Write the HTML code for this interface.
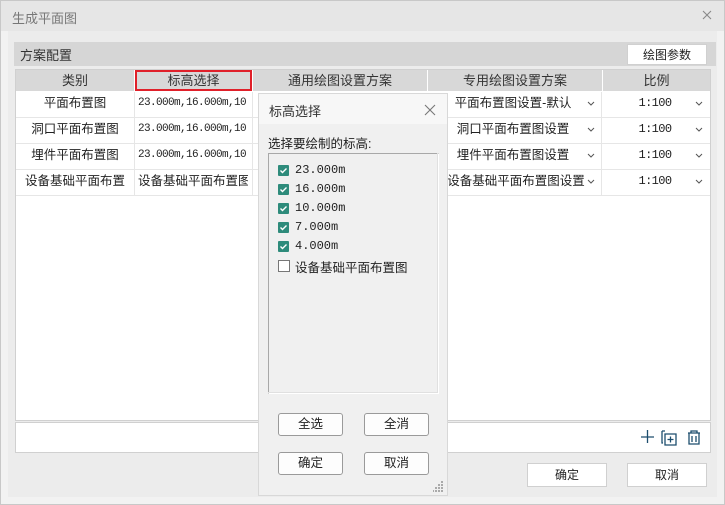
<!DOCTYPE html>
<html><head><meta charset="utf-8"><style>
*{box-sizing:border-box;margin:0;padding:0}
body{width:725px;height:505px;overflow:hidden;background:#f2f2f2;font-family:"Liberation Sans","Noto Sans CJK SC",sans-serif;font-size:12px;color:#222;position:relative}
.a{position:absolute}
.win{left:0;top:0;width:725px;height:505px;border:1px solid #c8c8c8}
.title{left:1px;top:1px;width:723px;height:30px;background:#e6e6e6}
.panel{left:8px;top:31px;width:709px;height:466px;background:#ececec}
.hdrbar{left:14px;top:42px;width:702px;height:24px;background:#d6d6d6}
.btn{background:#fff;border:1px solid #d0d0d0;text-align:center;font-size:12px}
.tbl{left:15px;top:69px;width:696px;height:352px;background:#fff;border:1px solid #d0d0d0}
.th{top:70px;height:21px;background:#d8d8d8;text-align:center;line-height:21px;font-size:13px;color:#333}
.cell{height:25px;line-height:25px;font-size:12.5px;white-space:nowrap;overflow:hidden}
.mono{font-family:"Liberation Mono",monospace;font-size:11px;letter-spacing:-0.6px}
.vl{width:1px;background:#e6e6e6}
.hl{height:1px;background:#e6e6e6}
.pop{left:258px;top:93px;width:190px;height:403px;background:#f0f0f0;border:1px solid #d8d8d8}
.pbtn{background:#fdfdfd;border:1px solid #9a9a9a;border-radius:3px;text-align:center;line-height:21px;font-size:12.5px;width:65px;height:23px}
.cb{width:11px;height:11px;background:#2e8b7b;border-radius:1px}
.cbl{font-family:"Liberation Mono","Noto Sans CJK SC",monospace;font-size:12px}
</style></head><body>
<div class="a win"></div>
<div class="a title"></div>
<div class="a" style="left:12px;top:8px;font-size:13px;color:#777">生成平面图</div>
<svg class="a" style="left:702px;top:10px" width="10" height="10"><path d="M1 1L9 9M9 1L1 9" stroke="#888" stroke-width="1.1"/></svg>
<div class="a panel"></div>
<div class="a hdrbar"></div>
<div class="a" style="left:20px;top:45px;font-size:13px;color:#333">方案配置</div>
<div class="a btn" style="left:627px;top:44px;width:80px;height:21px;line-height:20px">绘图参数</div>
<div class="a tbl"></div>
<div class="a th" style="left:16px;width:118px">类别</div>
<div class="a th" style="left:135px;width:117px;border:2px solid #e0202a;line-height:17px">标高选择</div>
<div class="a th" style="left:253px;width:174px">通用绘图设置方案</div>
<div class="a th" style="left:428px;width:174px">专用绘图设置方案</div>
<div class="a th" style="left:603px;width:107px">比例</div>
<div class="a vl" style="left:134px;top:92px;height:103px"></div>
<div class="a vl" style="left:252px;top:92px;height:103px"></div>
<div class="a vl" style="left:601px;top:92px;height:103px"></div>
<div class="a hl" style="left:16px;top:117px;width:694px"></div>
<div class="a hl" style="left:16px;top:143px;width:694px"></div>
<div class="a hl" style="left:16px;top:169px;width:694px"></div>
<div class="a hl" style="left:16px;top:195px;width:694px"></div>

<div class="a cell" style="left:16px;top:91px;width:118px;text-align:center">平面布置图</div>
<div class="a cell" style="left:16px;top:117px;width:118px;text-align:center">洞口平面布置图</div>
<div class="a cell" style="left:16px;top:143px;width:118px;text-align:center">埋件平面布置图</div>
<div class="a cell" style="left:16px;top:169px;width:118px;text-align:center">设备基础平面布置</div>
<div class="a cell mono" style="left:138px;top:91px;width:109px">23.000m,16.000m,10</div>
<div class="a cell mono" style="left:138px;top:117px;width:109px">23.000m,16.000m,10</div>
<div class="a cell mono" style="left:138px;top:143px;width:109px">23.000m,16.000m,10</div>
<div class="a cell" style="left:138px;top:169px;width:110px">设备基础平面布置图</div>

<div class="a cell" style="left:448px;top:91px;width:130px;text-align:center">平面布置图设置-默认</div>
<div class="a cell" style="left:448px;top:117px;width:130px;text-align:center">洞口平面布置图设置</div>
<div class="a cell" style="left:448px;top:143px;width:130px;text-align:center">埋件平面布置图设置</div>
<div class="a cell" style="left:446px;top:169px;width:140px;text-align:center;overflow:visible">设备基础平面布置图设置</div>
<div class="a cell mono" style="left:620px;top:91px;width:70px;text-align:center;font-size:12px">1:100</div>
<div class="a cell mono" style="left:620px;top:117px;width:70px;text-align:center;font-size:12px">1:100</div>
<div class="a cell mono" style="left:620px;top:143px;width:70px;text-align:center;font-size:12px">1:100</div>
<div class="a cell mono" style="left:620px;top:169px;width:70px;text-align:center;font-size:12px">1:100</div>
<svg class="a" style="left:586px;top:100px" width="120" height="90" fill="none" stroke="#555" stroke-width="1">
<path d="M2 2l3 3l3-3M2 28l3 3l3-3M2 54l3 3l3-3M2 80l3 3l3-3M110 2l3 3l3-3M110 28l3 3l3-3M110 54l3 3l3-3M110 80l3 3l3-3"/></svg>

<div class="a" style="left:15px;top:422px;width:696px;height:31px;background:#fff;border:1px solid #d0d0d0"></div>
<svg class="a" style="left:638px;top:428px" width="64" height="18" fill="none" stroke="#1d4e6e" stroke-width="1.3">
<path d="M3 9h13M9.5 2v13"/>
<path d="M24 3v12h1M27 3h-3M27 6h11v11h-11zM32.5 8.5v6M29.5 11.5h6"/>
<path d="M50 5h12M53 5v-2h6v2M51 5v11h10v-11M54 8v6M58 8v6"/>
</svg>
<div class="a btn" style="left:527px;top:463px;width:80px;height:24px;line-height:23px">确定</div>
<div class="a btn" style="left:627px;top:463px;width:80px;height:24px;line-height:23px">取消</div>

<div class="a pop"></div>
<div class="a" style="left:259px;top:94px;width:188px;height:30px;background:#f7f7f7"></div>
<div class="a" style="left:269px;top:101px;font-size:13px;color:#333">标高选择</div>
<svg class="a" style="left:424px;top:104px" width="12" height="12"><path d="M1 1L11 11M11 1L1 11" stroke="#777" stroke-width="1.1"/></svg>
<div class="a" style="left:268px;top:133px;font-size:12.5px">选择要绘制的标高:</div>
<div class="a" style="left:268px;top:153px;width:171px;height:241px;border:1px solid #a8a8a8;border-bottom-color:#fff;border-right-color:#fff;background:#f0f0f0"></div>
<div class="a" style="left:268px;top:153px;width:170px;height:240px;border-right:1px solid #e0e0e0;border-bottom:1px solid #e0e0e0"></div>
<div class="a cb" style="left:278px;top:165px"></div><div class="a cbl" style="left:295px;top:163px">23.000m</div>
<div class="a cb" style="left:278px;top:184px"></div><div class="a cbl" style="left:295px;top:182px">16.000m</div>
<div class="a cb" style="left:278px;top:203px"></div><div class="a cbl" style="left:295px;top:201px">10.000m</div>
<div class="a cb" style="left:278px;top:222px"></div><div class="a cbl" style="left:295px;top:220px">7.000m</div>
<div class="a cb" style="left:278px;top:241px"></div><div class="a cbl" style="left:295px;top:239px">4.000m</div>
<svg class="a" style="left:278px;top:165px" width="11" height="90" fill="none" stroke="#fff" stroke-width="1.4">
<path d="M2.5 5.5l2 2l4-4M2.5 24.5l2 2l4-4M2.5 43.5l2 2l4-4M2.5 62.5l2 2l4-4M2.5 81.5l2 2l4-4"/></svg>
<div class="a" style="left:278px;top:260px;width:12px;height:12px;border:1px solid #777;background:#fff"></div>
<div class="a" style="left:295px;top:257px;font-size:12.5px">设备基础平面布置图</div>
<div class="a pbtn" style="left:278px;top:413px">全选</div>
<div class="a pbtn" style="left:364px;top:413px">全消</div>
<div class="a pbtn" style="left:278px;top:452px">确定</div>
<div class="a pbtn" style="left:364px;top:452px">取消</div>
<svg class="a" style="left:433px;top:481px" width="12" height="12" fill="#aaa">
<rect x="8" y="0" width="2" height="2"/><rect x="5" y="3" width="2" height="2"/><rect x="8" y="3" width="2" height="2"/>
<rect x="2" y="6" width="2" height="2"/><rect x="5" y="6" width="2" height="2"/><rect x="8" y="6" width="2" height="2"/>
<rect x="-1" y="9" width="2" height="2"/><rect x="2" y="9" width="2" height="2"/><rect x="5" y="9" width="2" height="2"/><rect x="8" y="9" width="2" height="2"/></svg>
</body></html>
